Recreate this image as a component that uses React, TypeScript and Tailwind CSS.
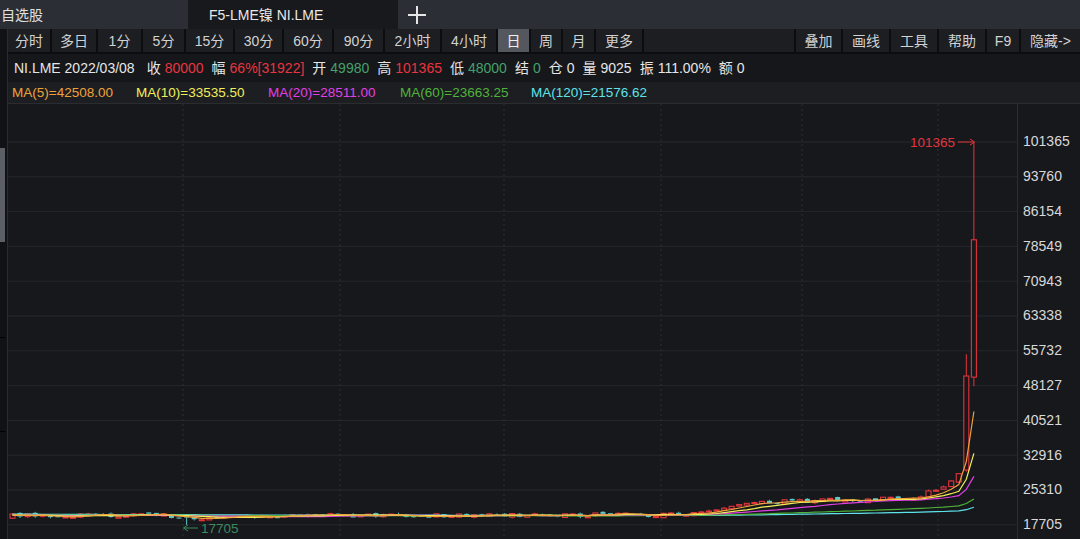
import React from 'react';

type Bar = { o: number; h: number; l: number; c: number };

const STEP = 7.57;
const TOP_PRICE = 101365;
const PX_PER = 34.8 / 7605.3;
const HIST = 120;
const N = 128;

const yOf = (p: number) => 38 + (TOP_PRICE - p) * PX_PER;
const xOf = (i: number) => 4.5 + STEP * i;

function mulberry32(a: number) {
  return () => {
    a |= 0;
    a = (a + 0x6d2b79f5) | 0;
    let t = Math.imul(a ^ (a >>> 15), 1 | a);
    t = (t + Math.imul(t ^ (t >>> 7), 61 | t)) ^ t;
    return ((t ^ (t >>> 14)) >>> 0) / 4294967296;
  };
}

// rough shape of the price path, by bar index (negative = history before the screen)
const base = (i: number) => {
  if (i < 0) return 20300 - (i + HIST) * 4;
  if (i < 20) return 19750;
  if (i < 27) return 19750 - Math.sin(((i - 20) / 7) * Math.PI) * 900;
  if (i < 60) return 19700;
  if (i < 88) return 19700 + (i - 60) * 10;
  if (i < 100) return 19980 + (i - 88) * 230;
  if (i < 118) return 22740 + (i - 100) * 40;
  return 23460 + Math.pow(i - 117, 2) * 80;
};

const rand = mulberry32(20220308);
const closes: number[] = [];
const bars: Bar[] = [];
let prev = 20300;
for (let k = -HIST; k < N; k++) {
  let o: number, c: number, h: number, l: number;
  if (k === 126) {
    o = 29682; c = 50227; h = 55000; l = 29300;
  } else if (k === 127) {
    o = 49980; c = 80000; h = 101365; l = 48000;
  } else {
    c = base(k) + (rand() - 0.5) * 900;
    o = prev + (rand() - 0.5) * 600;
    h = Math.max(o, c) + rand() * 320;
    l = Math.min(o, c) - rand() * 320;
    if (k === 23) l = 17705;
  }
  prev = c;
  closes.push(c);
  if (k >= 0) bars.push({ o, h, l, c });
}

const maLine = (n: number) =>
  bars
    .map((_, i) => {
      const end = i + HIST;
      let s = 0;
      for (let j = end - n + 1; j <= end; j++) s += closes[j];
      return `${xOf(i).toFixed(1)},${yOf(s / n).toFixed(1)}`;
    })
    .join(' ');

const MAS = [
  { n: 120, color: '#5fe3ea' },
  { n: 60, color: '#4fb33a' },
  { n: 20, color: '#e23fe6' },
  { n: 10, color: '#f2ee5a' },
  { n: 5, color: '#f0a23a' },
];

const AXIS = ['101365', '93760', '86154', '78549', '70943', '63338', '55732', '48127', '40521', '32916', '25310', '17705'];
const VLINES = [175, 332, 496, 653, 794, 930];

const LEFT_TOOLS: [string, number][] = [
  ['分时', 44], ['多日', 46], ['1分', 45], ['5分', 43], ['15分', 49], ['30分', 49], ['60分', 50],
  ['90分', 51], ['2小时', 57], ['4小时', 56], ['日', 33], ['周', 32], ['月', 33], ['更多', 48],
];
const RIGHT_TOOLS: [string, number][] = [
  ['叠加', 47], ['画线', 48], ['工具', 48], ['帮助', 48], ['F9', 34], ['隐藏->', 61],
];

const INFO: { label: string; value: string; color: string }[] = [
  { label: '收', value: '80000', color: 'text-[#e8353f]' },
  { label: '幅', value: '66%[31922]', color: 'text-[#e8353f]' },
  { label: '开', value: '49980', color: 'text-[#45a06c]' },
  { label: '高', value: '101365', color: 'text-[#e8353f]' },
  { label: '低', value: '48000', color: 'text-[#45a06c]' },
  { label: '结', value: '0', color: 'text-[#45a06c]' },
  { label: '仓', value: '0', color: 'text-[#e6e6e6]' },
  { label: '量', value: '9025', color: 'text-[#e6e6e6]' },
  { label: '振', value: '111.00%', color: 'text-[#e6e6e6]' },
  { label: '额', value: '0', color: 'text-[#e6e6e6]' },
];

const MA_TEXT = [
  { text: 'MA(5)=42508.00', cls: 'w-[124px] text-[#f0a23a]' },
  { text: 'MA(10)=33535.50', cls: 'w-[132px] text-[#f2ee5a]' },
  { text: 'MA(20)=28511.00', cls: 'w-[132px] text-[#e23fe6]' },
  { text: 'MA(60)=23663.25', cls: 'w-[131px] text-[#4fb33a]' },
  { text: 'MA(120)=21576.62', cls: 'text-[#5fe3ea]' },
];

const Candle: React.FC<{ bar: Bar; i: number }> = ({ bar, i }) => {
  const x = xOf(i);
  const up = bar.c >= bar.o;
  const top = yOf(Math.max(bar.o, bar.c));
  const bot = yOf(Math.min(bar.o, bar.c));
  const h = Math.max(bot - top, 1);
  const color = up ? '#e3343c' : '#5ec8c8';
  return (
    <g>
      <line x1={x} x2={x} y1={yOf(bar.h)} y2={top} stroke={color} strokeWidth={1} />
      <line x1={x} x2={x} y1={top + h} y2={yOf(bar.l)} stroke={color} strokeWidth={1} />
      {up ? (
        <rect x={x - 2.5} y={top} width={5} height={h} fill="#16181c" stroke={color} strokeWidth={1.1} />
      ) : (
        <rect x={x - 2.5} y={top} width={5} height={h} fill={color} />
      )}
    </g>
  );
};

const Chart: React.FC = () => (
  <svg width={1009} height={435} viewBox="0 0 1009 435" className="block">
    {AXIS.map((_, k) => (
      <line key={k} x1={0} x2={1009} y1={38 + k * 34.8} y2={38 + k * 34.8} stroke="#25282c" strokeWidth={1} />
    ))}
    {VLINES.map((x) => (
      <line key={x} x1={x} x2={x} y1={0} y2={435} stroke="#2b2e33" strokeWidth={1} strokeDasharray="2 3" />
    ))}
    {bars.map((b, i) => (
      <Candle key={i} bar={b} i={i} />
    ))}
    {MAS.map((m) => (
      <polyline key={m.n} points={maLine(m.n)} fill="none" stroke={m.color} strokeWidth={1.2} />
    ))}
    <text x={947} y={42.5} fill="#e3343c" fontSize={13.5} textAnchor="end" fontFamily="Liberation Sans, sans-serif">
      101365
    </text>
    <line x1={950} x2={966} y1={38} y2={38} stroke="#e3343c" strokeWidth={1} />
    <path d="M962 35 L966.5 38 L962 41" fill="none" stroke="#e3343c" strokeWidth={1} />
    <line x1={175.5} x2={190} y1={424} y2={424} stroke="#3e8a5f" strokeWidth={1} />
    <path d="M180 421 L175.5 424 L180 427" fill="none" stroke="#3e8a5f" strokeWidth={1} />
    <text x={193} y={428.8} fill="#3e8a5f" fontSize={13.5} fontFamily="Liberation Sans, sans-serif">
      17705
    </text>
  </svg>
);

export default function App() {
  return (
    <div className="w-[1080px] h-[539px] overflow-hidden flex flex-col bg-[#16181c] font-['Liberation_Sans','Noto_Sans_CJK_SC',sans-serif] text-[14px] leading-none">
      {/* tabs */}
      <div className="h-[29px] flex bg-[#2b2e35] shrink-0">
        <div className="w-[188px] flex items-center pl-[1px] text-[#e0e0e0]">自选股</div>
        <div className="w-[210px] flex items-center pl-[21px] bg-[#17191d] text-[#e8e8e8]">F5-LME镍 NI.LME</div>
        <div className="flex items-center pl-[9px]">
          <svg width="20" height="20" viewBox="0 0 20 20">
            <path d="M10 1v18M1 10h18" stroke="#e6e6e6" strokeWidth="2" />
          </svg>
        </div>
      </div>

      <div className="flex flex-1">
        {/* left strip with scroll handle */}
        <div className="w-[8px] shrink-0 flex flex-col bg-[#111215] border-r border-[#2a2c30]">
          <div className="h-[119px]" />
          <div className="w-[5px] h-[94px] bg-[#5d5f66]" />
          <div className="h-[95px]" />
          <div className="w-[5px] h-[1px] bg-[#000]" />
          <div className="h-[93px]" />
          <div className="w-[5px] h-[1px] bg-[#000]" />
        </div>

        <div className="flex-1 flex flex-col">
          {/* toolbar */}
          <div className="h-[25px] flex bg-[#1c1e22] border-b-2 border-[#0c0d0f] text-[#d2d2d2]">
            {LEFT_TOOLS.map(([t, w]) => (
              <div
                key={t}
                style={{ width: w }}
                className={`flex items-center justify-center border-r-2 border-[#0c0d0f] ${t === '日' ? 'bg-[#55575e] text-[#f0f0f0]' : ''}`}
              >
                {t}
              </div>
            ))}
            <div className="flex-1" />
            {RIGHT_TOOLS.map(([t, w]) => (
              <div key={t} style={{ width: w }} className="flex items-center justify-center border-l-2 border-[#0c0d0f]">
                {t}
              </div>
            ))}
          </div>

          {/* quote info */}
          <div className="h-[28px] flex items-center gap-[8px] pl-[6px] bg-[#15171a] text-[#e6e6e6]">
            <span className="mr-[4px]">NI.LME 2022/03/08</span>
            {INFO.map((it) => (
              <span key={it.label} className="flex items-center">
                <span className="mr-[4px]">{it.label}</span>
                <span className={it.color}>{it.value}</span>
              </span>
            ))}
          </div>

          {/* moving averages */}
          <div className="h-[22px] flex items-center pl-[4px] bg-[#1c1e22] border-b border-[#2a2c30] text-[13.5px]">
            {MA_TEXT.map((m) => (
              <span key={m.text} className={m.cls}>
                {m.text}
              </span>
            ))}
          </div>

          {/* chart + price axis */}
          <div className="flex flex-1 overflow-hidden">
            <Chart />
            <div className="flex-1 border-l border-[#2a2c30] pl-[5px] pt-[20px] flex flex-col text-[#d9d9d9]">
              {AXIS.map((v) => (
                <div key={v} className="h-[34.8px] flex items-center">
                  {v}
                </div>
              ))}
            </div>
          </div>
        </div>
      </div>
    </div>
  );
}
